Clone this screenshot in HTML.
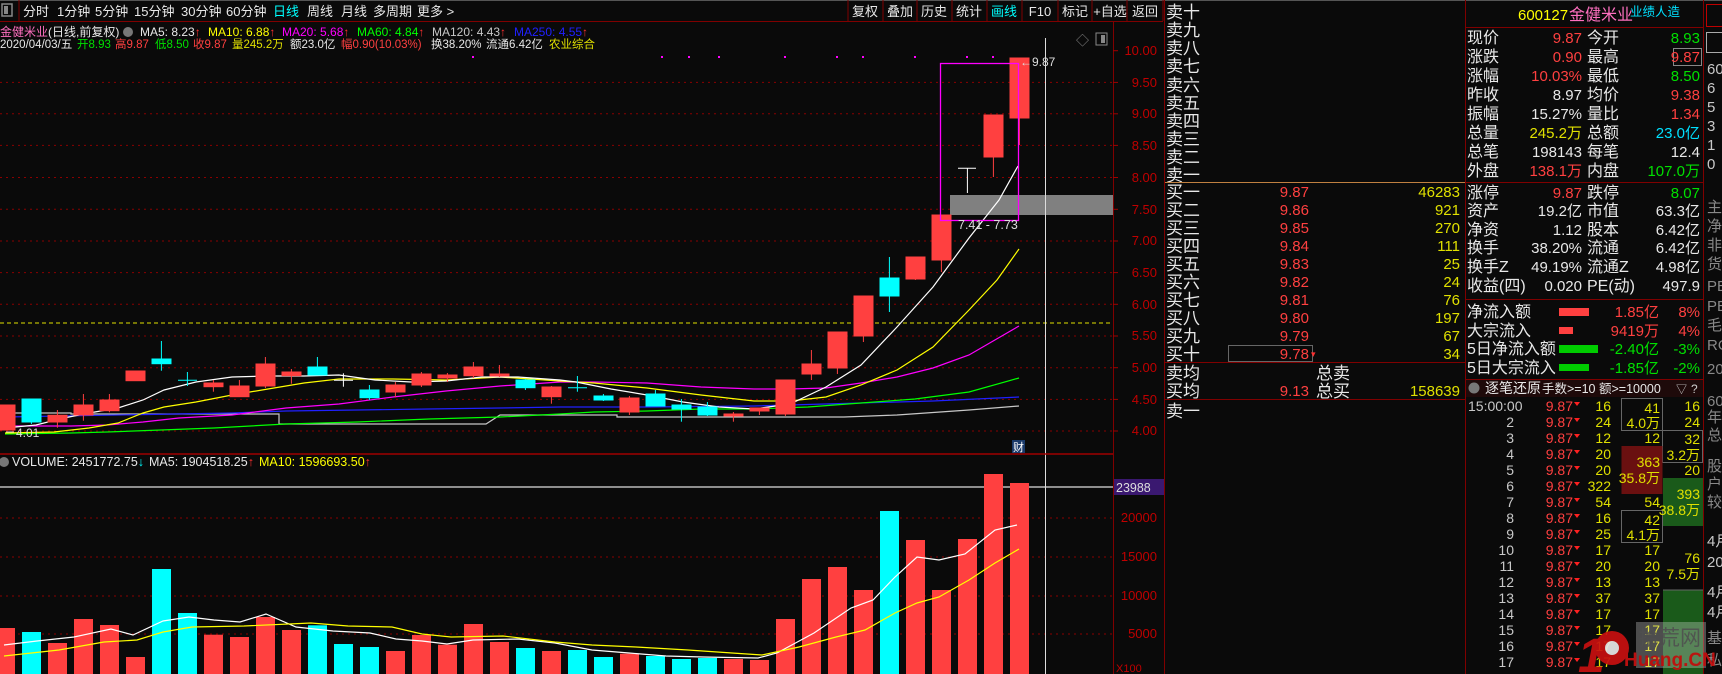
<!DOCTYPE html>
<html><head><meta charset="utf-8">
<style>
html,body{margin:0;padding:0;background:#0a0a0a;overflow:hidden;}
svg{display:block;font-family:"Liberation Sans","Noto Sans CJK SC",sans-serif;}
</style></head>
<body>
<svg width="1722" height="674" viewBox="0 0 1722 674" xmlns="http://www.w3.org/2000/svg">
<rect width="1722" height="674" fill="#0a0a0a"/>
<rect x="0" y="0" width="1722" height="1" fill="#555"/>
<rect x="2" y="4" width="10" height="12" fill="none" stroke="#888" stroke-width="1.5"/>
<rect x="4" y="6" width="4" height="8" fill="#888"/>
<line x1="19" y1="0" x2="19" y2="21" stroke="#800000"/>
<line x1="0" y1="21.5" x2="1163" y2="21.5" stroke="#800000"/>
<g font-size="13" fill="#e8e8e8">
<text x="23" y="16">分时</text><text x="57" y="16">1分钟</text><text x="95" y="16">5分钟</text>
<text x="134" y="16">15分钟</text><text x="181" y="16">30分钟</text><text x="226" y="16">60分钟</text>
<text x="273" y="16" fill="#00ffff">日线</text><text x="307" y="16">周线</text><text x="341" y="16">月线</text>
<text x="373" y="16">多周期</text><text x="417" y="16">更多 &gt;</text>
</g>
<g stroke="#800000">
<line x1="848" y1="0" x2="848" y2="21"/><line x1="883" y1="0" x2="883" y2="21"/><line x1="917" y1="0" x2="917" y2="21"/>
<line x1="952" y1="0" x2="952" y2="21"/><line x1="987" y1="0" x2="987" y2="21"/><line x1="1022" y1="0" x2="1022" y2="21"/>
<line x1="1058" y1="0" x2="1058" y2="21"/><line x1="1092" y1="0" x2="1092" y2="21"/><line x1="1127" y1="0" x2="1127" y2="21"/><line x1="1163" y1="0" x2="1163" y2="21"/>
</g>
<g font-size="13" fill="#e8e8e8" text-anchor="middle">
<text x="865" y="16">复权</text><text x="900" y="16">叠加</text><text x="934" y="16">历史</text>
<text x="969" y="16">统计</text><text x="1004" y="16" fill="#00ffff">画线</text><text x="1040" y="16">F10</text>
<text x="1075" y="16">标记</text><text x="1110" y="16">+自选</text><text x="1145" y="16">返回</text>
</g>
<g font-size="12">
<text x="0" y="36" fill="#ff70c0">金健米业</text>
<text x="48" y="36" fill="#e8e8e8">(日线,前复权)</text>
<circle cx="128" cy="32" r="5" fill="#777"/>
<text x="140" y="36" fill="#e8e8e8">MA5: 8.23<tspan fill="#ff3030">↑</tspan></text>
<text x="208" y="36" fill="#ffff00">MA10: 6.88<tspan fill="#ff3030">↑</tspan></text>
<text x="282" y="36" fill="#ff00ff">MA20: 5.68<tspan fill="#ff3030">↑</tspan></text>
<text x="357" y="36" fill="#00ff00">MA60: 4.84<tspan fill="#ff3030">↑</tspan></text>
<text x="432" y="36" fill="#c8c8c8">MA120: 4.43<tspan fill="#ff3030">↑</tspan></text>
<text x="514" y="36" fill="#2020ff">MA250: 4.55<tspan fill="#ff3030">↑</tspan></text>
</g>
<g font-size="11.5">
<text x="0" y="48" fill="#e8e8e8">2020/04/03/五</text>
<text x="77" y="48" fill="#00e000">开8.93</text>
<text x="115" y="48" fill="#ff4040">高9.87</text>
<text x="155" y="48" fill="#00e000">低8.50</text>
<text x="193" y="48" fill="#ff4040">收9.87</text>
<text x="232" y="48" fill="#e0e000">量245.2万</text>
<text x="290" y="48" fill="#e8e8e8">额23.0亿</text>
<text x="341" y="48" fill="#ff4040">幅0.90(10.03%)</text>
<text x="431" y="48" fill="#e8e8e8">换38.20%</text>
<text x="486" y="48" fill="#e8e8e8">流通6.42亿</text>
<text x="549" y="48" fill="#e0e000">农业综合</text>
</g>
<text x="1076" y="45" font-size="13" fill="#888">◇</text>
<rect x="1096" y="33" width="11" height="12" fill="none" stroke="#888"/>
<rect x="1101" y="35" width="4" height="8" fill="#888"/>
<line x1="1113.5" y1="22" x2="1113.5" y2="674" stroke="#800000"/>
<line x1="1164.5" y1="0" x2="1164.5" y2="674" stroke="#800000"/>
<g stroke="#8a0000" stroke-dasharray="2,4">
<line x1="0" y1="82.4" x2="1113" y2="82.4"/><line x1="0" y1="113.8" x2="1113" y2="113.8"/>
<line x1="0" y1="145.4" x2="1113" y2="145.4"/><line x1="0" y1="177.5" x2="1113" y2="177.5"/>
<line x1="0" y1="209.3" x2="1113" y2="209.3"/><line x1="0" y1="241" x2="1113" y2="241"/>
<line x1="0" y1="272.6" x2="1113" y2="272.6"/><line x1="0" y1="304.3" x2="1113" y2="304.3"/>
<line x1="0" y1="336" x2="1113" y2="336"/><line x1="0" y1="367.7" x2="1113" y2="367.7"/>
<line x1="0" y1="399.4" x2="1113" y2="399.4"/><line x1="0" y1="431" x2="1113" y2="431"/>
<line x1="0" y1="518" x2="1113" y2="518"/><line x1="0" y1="557" x2="1113" y2="557"/>
<line x1="0" y1="596" x2="1113" y2="596"/><line x1="0" y1="634" x2="1113" y2="634"/>
</g>
<g font-size="13" fill="#c00000" text-anchor="end">
<text x="1157" y="55">10.00</text><text x="1157" y="87">9.50</text><text x="1157" y="118">9.00</text>
<text x="1157" y="150">8.50</text><text x="1157" y="182">8.00</text><text x="1157" y="214">7.50</text>
<text x="1157" y="245">7.00</text><text x="1157" y="277">6.50</text><text x="1157" y="309">6.00</text>
<text x="1157" y="340">5.50</text><text x="1157" y="372">5.00</text><text x="1157" y="404">4.50</text>
<text x="1157" y="435">4.00</text>
<text x="1157" y="522">20000</text><text x="1157" y="561">15000</text><text x="1157" y="600">10000</text><text x="1157" y="638">5000</text>
</g>
<g stroke="#a00000">
<line x1="1113" y1="50.7" x2="1118" y2="50.7"/><line x1="1113" y1="82.4" x2="1118" y2="82.4"/><line x1="1113" y1="113.8" x2="1118" y2="113.8"/>
<line x1="1113" y1="145.4" x2="1118" y2="145.4"/><line x1="1113" y1="177.5" x2="1118" y2="177.5"/><line x1="1113" y1="209.3" x2="1118" y2="209.3"/>
<line x1="1113" y1="241" x2="1118" y2="241"/><line x1="1113" y1="272.6" x2="1118" y2="272.6"/><line x1="1113" y1="304.3" x2="1118" y2="304.3"/>
<line x1="1113" y1="336" x2="1118" y2="336"/><line x1="1113" y1="367.7" x2="1118" y2="367.7"/><line x1="1113" y1="399.4" x2="1118" y2="399.4"/>
<line x1="1113" y1="431" x2="1118" y2="431"/>
</g>
<line x1="0" y1="323" x2="1113" y2="323" stroke="#e0e000" stroke-dasharray="4,3"/>
<g fill="#ff00ff"><rect x="472" y="56" width="2" height="2"/><rect x="661" y="56" width="2" height="2"/><rect x="688" y="56" width="2" height="2"/><rect x="718" y="56" width="2" height="2"/><rect x="784" y="56" width="2" height="2"/><rect x="836" y="56" width="2" height="2"/><rect x="862" y="56" width="2" height="2"/><rect x="914" y="56" width="2" height="2"/><rect x="966" y="56" width="2" height="2"/><rect x="992" y="56" width="2" height="2"/></g>
<rect x="950" y="195" width="163" height="20" fill="#808080"/>
<g fill="none" stroke-width="1.2">
<polyline stroke="#c8c8c8" points="5,413 71,413 71,414 175,414 279,414 279,424 486,424 500,415 617,415 617,417 754,417 844,417 897,415 969,410 1019,406"/>
<polyline stroke="#2020ff" points="5,417 175,414 232,413 286,411 357,410 429,409 500,408 560,407 647,407 754,406 861,403 933,401 1019,397"/>
<polyline stroke="#00ff00" points="5,434 71,433 107,432 161,430 214,428 286,424 357,422 429,419 500,417 560,414 594,412 647,411 701,409 754,409 808,407 861,403 915,399 969,392 1019,378"/>
<polyline stroke="#ff00ff" points="5,426 71,426 107,425 143,422 179,418 232,415 286,408 339,404 393,397 446,391 500,386 560,382 594,382 647,383 701,387 754,389 790,389 826,388 861,383 897,377 933,368 969,355 1019,326"/>
<polyline stroke="#ffff00" points="5,433 54,432 89,428 118,423 143,413 164,407 196,402 232,395 268,389 304,383 339,379 393,379 446,380 500,377 560,381 594,383 647,388 701,395 754,401 790,401 826,397 861,385 897,370 933,347 969,310 997,280 1019,249"/>
<polyline stroke="#ffffff" points="5,428 36,425 64,418 89,413 118,408 143,400 164,390 196,382 232,377 268,376 304,376 339,375 375,380 411,382 446,381 482,377 518,377 560,380 576,382 611,389 647,395 683,402 719,407 754,409 790,404 826,387 861,365 897,327 933,287 969,238 999,200 1018,166"/>
</g>
<g fill="#ff4040" stroke="#ff4040">
<rect x="-4" y="405" width="19" height="25"/>
<line x1="57.4" y1="410" x2="57.4" y2="427.7"/><rect x="48" y="415.3" width="19" height="6.7"/>
<line x1="83.4" y1="394" x2="83.4" y2="420.7"/><rect x="74" y="405" width="19" height="10"/>
<line x1="109.4" y1="394" x2="109.4" y2="412.3"/><rect x="100" y="400" width="19" height="10.7"/>
<rect x="126" y="371" width="19" height="9.7"/>
<line x1="213.4" y1="380" x2="213.4" y2="391.7"/><rect x="204" y="383" width="19" height="3.7"/>
<line x1="239.4" y1="380" x2="239.4" y2="396.7"/><rect x="230" y="386" width="19" height="10.7"/>
<line x1="265.4" y1="357" x2="265.4" y2="388"/><rect x="256" y="364" width="19" height="22"/>
<line x1="291.4" y1="369" x2="291.4" y2="383.7"/><rect x="282" y="372" width="19" height="3.7"/>
<line x1="395.4" y1="382" x2="395.4" y2="397.3"/><rect x="386" y="385" width="19" height="7"/>
<line x1="421.4" y1="372" x2="421.4" y2="387"/><rect x="412" y="374" width="19" height="11"/>
<line x1="447.4" y1="373" x2="447.4" y2="382"/><rect x="438" y="375" width="19" height="3"/>
<line x1="473.4" y1="362" x2="473.4" y2="378"/><rect x="464" y="367" width="19" height="8.7"/>
<line x1="499.4" y1="365" x2="499.4" y2="377"/><rect x="490" y="374" width="19" height="2"/>
<line x1="551.4" y1="386" x2="551.4" y2="403.7"/><rect x="542" y="387" width="19" height="9.7"/>
<line x1="629.4" y1="396" x2="629.4" y2="415"/><rect x="620" y="398" width="19" height="14"/>
<line x1="733.4" y1="412" x2="733.4" y2="421.7"/><rect x="724" y="414" width="19" height="2"/>
<line x1="759.4" y1="408" x2="759.4" y2="415"/><rect x="750" y="408" width="19" height="3"/>
<line x1="785.4" y1="380" x2="785.4" y2="416"/><rect x="776" y="380" width="19" height="34"/>
<line x1="811.4" y1="350" x2="811.4" y2="380"/><rect x="802" y="364" width="19" height="10"/>
<line x1="837.4" y1="332" x2="837.4" y2="374"/><rect x="828" y="332" width="19" height="36"/>
<line x1="863.4" y1="296" x2="863.4" y2="342"/><rect x="854" y="296" width="19" height="40"/>
<line x1="915.4" y1="257" x2="915.4" y2="280"/><rect x="906" y="257" width="19" height="22"/>
<line x1="941.4" y1="215" x2="941.4" y2="272"/><rect x="932" y="215" width="19" height="45"/>
<line x1="993.4" y1="115" x2="993.4" y2="177"/><rect x="984" y="115" width="19" height="42"/>
<line x1="1019.4" y1="58" x2="1019.4" y2="145"/><rect x="1010" y="58" width="19" height="60"/>
</g>
<g fill="#00ffff" stroke="#00ffff">
<line x1="31.4" y1="399" x2="31.4" y2="424"/><rect x="22" y="399" width="19" height="23"/>
<line x1="161.4" y1="341" x2="161.4" y2="370.7"/><rect x="152" y="359" width="19" height="4.7"/>
<line x1="187.4" y1="372" x2="187.4" y2="386"/><line x1="178" y1="380.3" x2="197" y2="380.3"/>
<line x1="317.4" y1="357" x2="317.4" y2="375"/><rect x="308" y="367" width="19" height="8"/>
<line x1="369.4" y1="385" x2="369.4" y2="400"/><rect x="360" y="390" width="19" height="7.7"/>
<line x1="525.4" y1="379" x2="525.4" y2="390"/><rect x="516" y="380" width="19" height="7.7"/>
<line x1="577.4" y1="376" x2="577.4" y2="391.7"/><line x1="568" y1="387.7" x2="587" y2="387.7"/>
<line x1="603.4" y1="394" x2="603.4" y2="401"/><rect x="594" y="396" width="19" height="4"/>
<line x1="655.4" y1="390" x2="655.4" y2="406"/><rect x="646" y="394" width="19" height="12"/>
<line x1="681.4" y1="399" x2="681.4" y2="421.7"/><rect x="672" y="405" width="19" height="4"/>
<line x1="707.4" y1="402" x2="707.4" y2="416"/><rect x="698" y="407" width="19" height="8"/>
<line x1="889.4" y1="257" x2="889.4" y2="312"/><rect x="880" y="278" width="19" height="18"/>
</g>
<g stroke="#fff">
<line x1="343.4" y1="373.3" x2="343.4" y2="386.7"/><line x1="334" y1="380.3" x2="353" y2="380.3"/>
<line x1="958" y1="168.3" x2="976" y2="168.3"/><line x1="967.4" y1="168" x2="967.4" y2="193"/>
</g>
<rect x="940.5" y="63.5" width="78" height="157" fill="none" stroke="#ff00ff" stroke-width="1.3"/>
<text x="958" y="229" font-size="12.5" fill="#ddd">7.41 - 7.73</text>
<text x="1020" y="66" font-size="12" fill="#ddd">←9.87</text>
<text x="16" y="437" font-size="12" fill="#ddd">4.01</text>
<line x1="6" y1="432" x2="14" y2="432" stroke="#ddd"/>
<rect x="1012" y="440" width="13" height="13" fill="#1a3a6a"/>
<text x="1013" y="451" font-size="11" fill="#fff">财</text>
<line x1="1045.5" y1="38" x2="1045.5" y2="674" stroke="#ddd"/>
<line x1="0" y1="454" x2="1113" y2="454" stroke="#a00000" stroke-width="1.5"/>
<circle cx="4" cy="462" r="5" fill="#777"/>
<g font-size="12.5">
<text x="12" y="466" fill="#e8e8e8">VOLUME: 2451772.75<tspan fill="#00ffff">↓</tspan></text>
<text x="149" y="466" fill="#e8e8e8">MA5: 1904518.25<tspan fill="#ff3030">↑</tspan></text>
<text x="259" y="466" fill="#ffff00">MA10: 1596693.50<tspan fill="#ff3030">↑</tspan></text>
</g>
<line x1="0" y1="487" x2="1113" y2="487" stroke="#ddd" stroke-width="1.3"/>
<rect x="1114" y="479" width="50" height="16" fill="#3a1870"/>
<text x="1116" y="492" font-size="12.5" fill="#ddd">23988</text>
<text x="1116" y="672" font-size="11" fill="#c00000">X100</text>
<g fill="#ff4040">
<rect x="-4" y="628" width="19" height="46"/><rect x="48" y="643" width="19" height="31"/><rect x="74" y="619" width="19" height="55"/>
<rect x="100" y="625" width="19" height="49"/><rect x="126" y="657" width="19" height="17"/><rect x="204" y="634.7" width="19" height="40"/>
<rect x="230" y="637" width="19" height="37"/><rect x="256" y="617" width="19" height="57"/><rect x="282" y="630" width="19" height="44"/>
<rect x="386" y="651" width="19" height="23"/><rect x="412" y="635" width="19" height="39"/><rect x="438" y="644.7" width="19" height="30"/>
<rect x="464" y="624" width="19" height="50"/><rect x="490" y="642" width="19" height="32"/><rect x="542" y="651" width="19" height="23"/>
<rect x="620" y="653.7" width="19" height="21"/><rect x="724" y="659" width="19" height="15"/><rect x="750" y="660" width="19" height="14"/>
<rect x="776" y="619" width="19" height="55"/><rect x="802" y="579" width="19" height="95"/><rect x="828" y="567" width="19" height="107"/>
<rect x="854" y="590" width="19" height="84"/><rect x="906" y="540" width="19" height="134"/><rect x="932" y="590" width="19" height="84"/>
<rect x="958" y="539" width="19" height="135"/><rect x="984" y="474" width="19" height="200"/><rect x="1010" y="483" width="19" height="191"/>
</g>
<g fill="#00ffff">
<rect x="22" y="632" width="19" height="42"/><rect x="152" y="569" width="19" height="105"/><rect x="178" y="613" width="19" height="61"/>
<rect x="308" y="625.3" width="19" height="49"/><rect x="334" y="644" width="19" height="30"/><rect x="360" y="647" width="19" height="27"/>
<rect x="516" y="648" width="19" height="26"/><rect x="568" y="650" width="19" height="24"/><rect x="594" y="657" width="19" height="17"/>
<rect x="646" y="656" width="19" height="18"/><rect x="672" y="659" width="19" height="15"/><rect x="698" y="658" width="19" height="16"/>
<rect x="880" y="511" width="19" height="163"/>
</g>
<g fill="none" stroke-width="1.2">
<polyline stroke="#ffffff" points="4,645 37,641 74,637 111,629 133,635 163,621 189,617 214,620 240,622 266,614 296,627 333,631 370,633 396,639 422,641 447,644 473,640 518,639 555,643 592,650 629,653 666,656 703,657 758,658 777,653 814,633 851,608 873,600 895,577 917,557 939,560 965,554 995,530 1017,525"/>
<polyline stroke="#ffff00" points="4,656 59,650 104,642 137,640 163,632 192,627 244,626 311,623 348,626 392,627 422,634 451,637 503,636 555,642 592,645 636,647 688,650 732,653 762,655 799,647 836,637 865,630 895,613 917,603 939,597 969,580 995,563 1019,549"/>
</g>
<g font-size="17" fill="#e8e8e8">
<text x="1166" y="18">卖十</text><text x="1166" y="36">卖九</text><text x="1166" y="54">卖八</text><text x="1166" y="72">卖七</text>
<text x="1166" y="91">卖六</text><text x="1166" y="109">卖五</text><text x="1166" y="127">卖四</text><text x="1166" y="145">卖三</text>
<text x="1166" y="163">卖二</text><text x="1166" y="181">卖一</text>
<text x="1166" y="198">买一</text><text x="1166" y="216">买二</text><text x="1166" y="234">买三</text><text x="1166" y="252">买四</text>
<text x="1166" y="270">买五</text><text x="1166" y="288">买六</text><text x="1166" y="306">买七</text><text x="1166" y="324">买八</text>
<text x="1166" y="342">买九</text><text x="1166" y="360">买十</text>
<text x="1166" y="379">卖均</text><text x="1316" y="379">总卖</text>
<text x="1166" y="397">买均</text><text x="1316" y="397">总买</text>
<text x="1166" y="417">卖一</text>
</g>
<line x1="1165" y1="182.5" x2="1465" y2="182.5" stroke="#c08040"/>
<line x1="1165" y1="362.5" x2="1465" y2="362.5" stroke="#800000"/>
<line x1="1165" y1="399.5" x2="1465" y2="399.5" stroke="#800000"/>
<rect x="1228.5" y="345.5" width="84" height="16" fill="none" stroke="#666"/>
<g font-size="15" fill="#ff4040" text-anchor="end">
<text x="1309" y="197">9.87</text><text x="1309" y="215">9.86</text><text x="1309" y="233">9.85</text><text x="1309" y="251">9.84</text>
<text x="1309" y="269">9.83</text><text x="1309" y="287">9.82</text><text x="1309" y="305">9.81</text><text x="1309" y="323">9.80</text>
<text x="1309" y="341">9.79</text><text x="1309" y="359">9.78</text><text x="1309" y="396">9.13</text>
</g>
<text x="1311" y="357" font-size="9" fill="#ff3030">▾</text>
<g font-size="15" fill="#e0e000" text-anchor="end">
<text x="1460" y="197">46283</text><text x="1460" y="215">921</text><text x="1460" y="233">270</text><text x="1460" y="251">111</text>
<text x="1460" y="269">25</text><text x="1460" y="287">24</text><text x="1460" y="305">76</text><text x="1460" y="323">197</text>
<text x="1460" y="341">67</text><text x="1460" y="359">34</text><text x="1460" y="396">158639</text>
</g>
<line x1="1465.5" y1="0" x2="1465.5" y2="674" stroke="#800000"/>
<line x1="1703.5" y1="0" x2="1703.5" y2="674" stroke="#800000"/>
<text x="1518" y="20" font-size="15" fill="#ffff00">600127</text>
<text x="1569" y="20" font-size="16" fill="#ff70c0">金健米业</text>
<text x="1630" y="16" font-size="12.5" fill="#00e0ff">业绩人造</text>
<line x1="1465" y1="27.5" x2="1703" y2="27.5" stroke="#800000"/>
<g font-size="16" fill="#e8e8e8">
<text x="1467" y="43">现价</text><text x="1587" y="43">今开</text>
<text x="1467" y="62">涨跌</text><text x="1587" y="62">最高</text>
<text x="1467" y="81">涨幅</text><text x="1587" y="81">最低</text>
<text x="1467" y="100">昨收</text><text x="1587" y="100">均价</text>
<text x="1467" y="119">振幅</text><text x="1587" y="119">量比</text>
<text x="1467" y="138">总量</text><text x="1587" y="138">总额</text>
<text x="1467" y="157">总笔</text><text x="1587" y="157">每笔</text>
<text x="1467" y="176">外盘</text><text x="1587" y="176">内盘</text>
<text x="1467" y="198">涨停</text><text x="1587" y="198">跌停</text>
<text x="1467" y="216">资产</text><text x="1587" y="216">市值</text>
<text x="1467" y="235">净资</text><text x="1587" y="235">股本</text>
<text x="1467" y="253">换手</text><text x="1587" y="253">流通</text>
<text x="1467" y="272">换手Z</text><text x="1587" y="272">流通Z</text>
<text x="1467" y="291">收益(四)</text><text x="1587" y="291">PE(动)</text>
<text x="1467" y="317">净流入额</text><text x="1467" y="336">大宗流入</text>
<text x="1467" y="354">5日净流入额</text><text x="1467" y="373">5日大宗流入</text>
</g>
<rect x="1673.5" y="48.5" width="28" height="17" fill="none" stroke="#888"/>
<g font-size="15" text-anchor="end">
<text x="1582" y="43" fill="#ff4040">9.87</text><text x="1700" y="43" fill="#00e000">8.93</text>
<text x="1582" y="62" fill="#ff4040">0.90</text><text x="1700" y="62" fill="#ff4040">9.87</text>
<text x="1582" y="81" fill="#ff4040">10.03%</text><text x="1700" y="81" fill="#00e000">8.50</text>
<text x="1582" y="100" fill="#e8e8e8">8.97</text><text x="1700" y="100" fill="#ff4040">9.38</text>
<text x="1582" y="119" fill="#e8e8e8">15.27%</text><text x="1700" y="119" fill="#ff4040">1.34</text>
<text x="1582" y="138" fill="#e0e000">245.2万</text><text x="1700" y="138" fill="#00e0ff">23.0亿</text>
<text x="1582" y="157" fill="#e8e8e8">198143</text><text x="1700" y="157" fill="#e8e8e8">12.4</text>
<text x="1582" y="176" fill="#ff4040">138.1万</text><text x="1700" y="176" fill="#00e000">107.0万</text>
<text x="1582" y="198" fill="#ff4040">9.87</text><text x="1700" y="198" fill="#00e000">8.07</text>
<text x="1582" y="216" fill="#e8e8e8">19.2亿</text><text x="1700" y="216" fill="#e8e8e8">63.3亿</text>
<text x="1582" y="235" fill="#e8e8e8">1.12</text><text x="1700" y="235" fill="#e8e8e8">6.42亿</text>
<text x="1582" y="253" fill="#e8e8e8">38.20%</text><text x="1700" y="253" fill="#e8e8e8">6.42亿</text>
<text x="1582" y="272" fill="#e8e8e8">49.19%</text><text x="1700" y="272" fill="#e8e8e8">4.98亿</text>
<text x="1582" y="291" fill="#e8e8e8">0.020</text><text x="1700" y="291" fill="#e8e8e8">497.9</text>
<text x="1659" y="317" fill="#ff4040">1.85亿</text><text x="1700" y="317" fill="#ff4040">8%</text>
<text x="1659" y="336" fill="#ff4040">9419万</text><text x="1700" y="336" fill="#ff4040">4%</text>
<text x="1659" y="354" fill="#00e000">-2.40亿</text><text x="1700" y="354" fill="#00e000">-3%</text>
<text x="1659" y="373" fill="#00e000">-1.85亿</text><text x="1700" y="373" fill="#00e000">-2%</text>
</g>
<line x1="1465" y1="182.5" x2="1703" y2="182.5" stroke="#800000"/>
<line x1="1465" y1="299.5" x2="1703" y2="299.5" stroke="#800000"/>
<rect x="1559" y="308" width="30" height="8" fill="#ff4040"/>
<rect x="1559" y="327" width="14" height="7" fill="#ff4040"/>
<rect x="1559" y="345" width="39" height="8" fill="#00cc00"/>
<rect x="1559" y="364" width="30" height="7" fill="#00cc00"/>
<line x1="1465" y1="379.5" x2="1703" y2="379.5" stroke="#800000"/>
<rect x="1466" y="380" width="237" height="17" fill="#1e0a0a"/>
<circle cx="1474" cy="388" r="5.5" fill="#777"/>
<text x="1485" y="393" font-size="14" fill="#e8e8e8">逐笔还原</text>
<text x="1542" y="393" font-size="12.5" fill="#e8e8e8">手数&gt;=10 额&gt;=10000</text>
<text x="1676" y="393" font-size="11" fill="#ccc">▽</text>
<text x="1691" y="393" font-size="12" fill="#ccc">?</text>
<rect x="1621.5" y="398.5" width="41" height="32" fill="none" stroke="#666"/>
<rect x="1662.5" y="430.5" width="40" height="32" fill="none" stroke="#666"/>
<rect x="1621.5" y="446" width="41" height="48" fill="#6a1010"/>
<rect x="1663" y="478" width="40" height="48" fill="#1a5a1a"/>
<rect x="1621.5" y="510.5" width="41" height="32" fill="none" stroke="#666"/>
<rect x="1663" y="590" width="40" height="84" fill="#1a5a1a"/>
<line x1="1663" y1="590" x2="1703" y2="590" stroke="#666"/>
<text x="1468" y="411" font-size="14" fill="#c8c8c8">15:00:00</text>
<g font-size="14" text-anchor="end">
<g fill="#c8c8c8">
<text x="1514" y="427">2</text><text x="1514" y="443">3</text><text x="1514" y="459">4</text><text x="1514" y="475">5</text>
<text x="1514" y="491">6</text><text x="1514" y="507">7</text><text x="1514" y="523">8</text><text x="1514" y="539">9</text>
<text x="1514" y="555">10</text><text x="1514" y="571">11</text><text x="1514" y="587">12</text><text x="1514" y="603">13</text>
<text x="1514" y="619">14</text><text x="1514" y="635">15</text><text x="1514" y="651">16</text><text x="1514" y="667">17</text>
</g>
<g fill="#ff4040">
<text x="1573" y="411">9.87</text><text x="1573" y="427">9.87</text><text x="1573" y="443">9.87</text><text x="1573" y="459">9.87</text>
<text x="1573" y="475">9.87</text><text x="1573" y="491">9.87</text><text x="1573" y="507">9.87</text><text x="1573" y="523">9.87</text>
<text x="1573" y="539">9.87</text><text x="1573" y="555">9.87</text><text x="1573" y="571">9.87</text><text x="1573" y="587">9.87</text>
<text x="1573" y="603">9.87</text><text x="1573" y="619">9.87</text><text x="1573" y="635">9.87</text><text x="1573" y="651">9.87</text>
<text x="1573" y="667">9.87</text>
</g>
<g fill="#e0e000">
<text x="1611" y="411">16</text><text x="1611" y="427">24</text><text x="1611" y="443">12</text><text x="1611" y="459">20</text>
<text x="1611" y="475">20</text><text x="1611" y="491">322</text><text x="1611" y="507">54</text><text x="1611" y="523">16</text>
<text x="1611" y="539">25</text><text x="1611" y="555">17</text><text x="1611" y="571">20</text><text x="1611" y="587">13</text>
<text x="1611" y="603">37</text><text x="1611" y="619">17</text><text x="1611" y="635">17</text><text x="1611" y="651">17</text>
<text x="1611" y="667">17</text>
<text x="1660" y="413">41</text><text x="1660" y="428">4.0万</text><text x="1660" y="443">12</text>
<text x="1660" y="467">363</text><text x="1660" y="483">35.8万</text><text x="1660" y="507">54</text>
<text x="1660" y="525">42</text><text x="1660" y="540">4.1万</text><text x="1660" y="555">17</text><text x="1660" y="571">20</text>
<text x="1660" y="587">13</text><text x="1660" y="603">37</text><text x="1660" y="619">17</text><text x="1660" y="635">17</text><text x="1660" y="651">17</text><text x="1660" y="667">17</text>
<text x="1700" y="411">16</text><text x="1700" y="427">24</text><text x="1700" y="444">32</text><text x="1700" y="460">3.2万</text>
<text x="1700" y="475">20</text><text x="1700" y="499">393</text><text x="1700" y="515">38.8万</text>
<text x="1700" y="563">76</text><text x="1700" y="579">7.5万</text>
</g>
</g>
<g fill="#ff2020">
<polygon points="1574,402 1580,402 1577,406"/><polygon points="1574,418 1580,418 1577,422"/><polygon points="1574,434 1580,434 1577,438"/>
<polygon points="1574,450 1580,450 1577,454"/><polygon points="1574,466 1580,466 1577,470"/><polygon points="1574,482 1580,482 1577,486"/>
<polygon points="1574,498 1580,498 1577,502"/><polygon points="1574,514 1580,514 1577,518"/><polygon points="1574,530 1580,530 1577,534"/>
<polygon points="1574,546 1580,546 1577,550"/><polygon points="1574,562 1580,562 1577,566"/><polygon points="1574,578 1580,578 1577,582"/>
<polygon points="1574,594 1580,594 1577,598"/><polygon points="1574,610 1580,610 1577,614"/><polygon points="1574,626 1580,626 1577,630"/>
<polygon points="1574,642 1580,642 1577,646"/><polygon points="1574,658 1580,658 1577,662"/>
</g>
<rect x="1706.5" y="4.5" width="20" height="22" fill="none" stroke="#c00000"/>
<rect x="1706.5" y="32.5" width="20" height="20" fill="none" stroke="#aaa"/>
<g font-size="15" fill="#c8c8c8">
<text x="1707" y="74">60</text><text x="1707" y="93">6</text><text x="1707" y="112">5</text><text x="1707" y="131">3</text>
<text x="1707" y="150">1</text><text x="1707" y="169">0</text>
<text x="1707" y="212" fill="#888">主</text><text x="1707" y="231" fill="#888">净</text><text x="1707" y="250" fill="#888">非</text><text x="1707" y="269" fill="#888">货</text>
<text x="1707" y="291" fill="#888">PE</text><text x="1707" y="311" fill="#888">PE</text><text x="1707" y="330" fill="#888">毛</text><text x="1707" y="350" fill="#888">RO</text>
<text x="1707" y="374" fill="#888">20</text><text x="1707" y="406" fill="#888">60</text><text x="1707" y="422" fill="#888">年</text><text x="1707" y="440" fill="#888">总</text>
<text x="1707" y="471" fill="#888">股</text><text x="1707" y="489" fill="#888">户</text><text x="1707" y="507" fill="#888">较</text>
<text x="1707" y="546">4月</text><text x="1707" y="567">20</text><text x="1707" y="597">4月</text><text x="1707" y="617">4月</text>
<text x="1707" y="643" fill="#888">基</text><text x="1707" y="665" fill="#888">私</text>
</g>
<g opacity="0.92">
<rect x="1636" y="622" width="70" height="46" fill="#ddd" opacity="0.35"/>
<text x="1578" y="672" font-size="48" font-weight="bold" fill="#c81010" font-style="italic">1</text>
<circle cx="1612" cy="648" r="17" fill="#c81010"/>
<circle cx="1612" cy="648" r="7" fill="#e8e8e8"/>
<text x="1638" y="645" font-size="21" fill="#555">拾荒网</text>
<text x="1624" y="666" font-size="19" font-weight="bold" fill="#c81010">Huang.CN</text>
</g>
</svg>
</body></html>
